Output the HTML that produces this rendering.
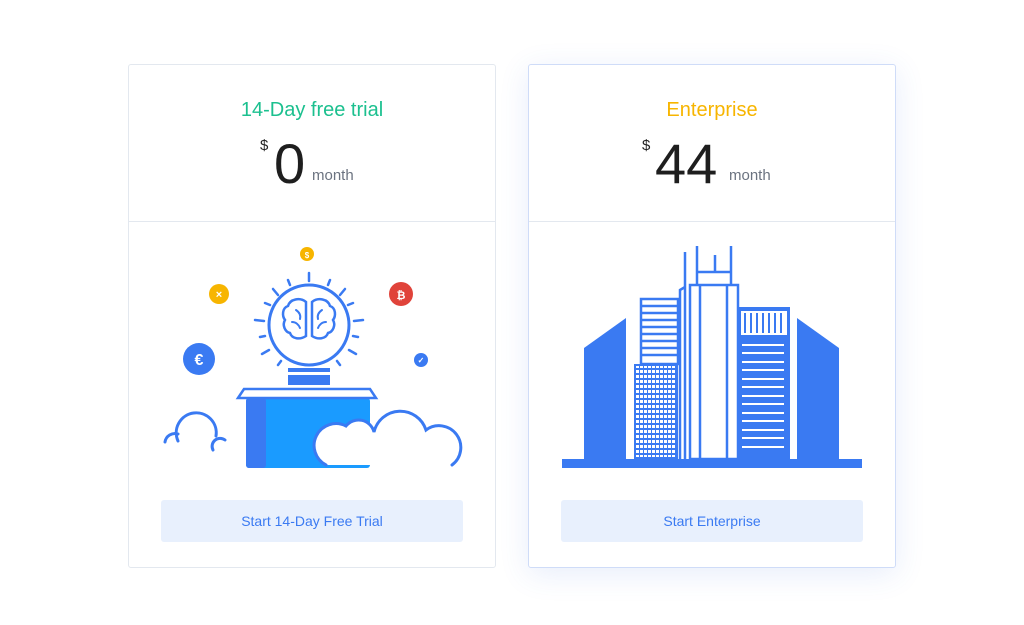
<!DOCTYPE html>
<html><head><style>
body{margin:0;width:1024px;height:625px;background:#fff;font-family:"Liberation Sans",sans-serif;position:relative;overflow:hidden}
.card{position:absolute;top:64px;width:366px;height:502px;border:1px solid #e3e8ef;border-radius:3px;background:#fff}
.c2{border-color:#cfdcf8;box-shadow:0 6px 30px rgba(60,110,220,.12)}
.title{position:absolute;top:98px;width:100%;text-align:center;font-size:20px}
.div{position:absolute;top:156px;left:0;right:0;height:1px;background:#e3e8ef}
.btn{position:absolute;left:32px;top:435px;width:302px;height:42px;background:#e8f0fd;border-radius:3px;color:#3a7af2;font-size:14px;text-align:center;line-height:42px}
.dol{position:absolute;font-size:15px;color:#222}
.num{position:absolute;font-size:56px;color:#1e1e1e;line-height:1}
.mo{position:absolute;font-size:15px;color:#6b7380}
</style></head><body>
<div class="card" style="left:128px">
 <div class="title" style="top:34px;color:#1cc08f">14-Day free trial</div>
 <div class="dol" style="left:131px;top:72px">$</div>
 <div class="num" style="left:145px;top:71px">0</div>
 <div class="mo" style="left:183px;top:102px">month</div>
 <div class="div"></div>
 <div class="btn">Start 14-Day Free Trial</div>
</div>
<div class="card c2" style="left:528px">
 <div class="title" style="top:34px;color:#f7b500">Enterprise</div>
 <div class="dol" style="left:113px;top:72px">$</div>
 <div class="num" style="left:126px;top:71px">44</div>
 <div class="mo" style="left:200px;top:102px">month</div>
 <div class="div"></div>
 <div class="btn">Start Enterprise</div>
</div>
<svg width="1024" height="625" style="position:absolute;left:0;top:0">
<g fill="none" stroke="#3a7af2" stroke-width="3" stroke-linecap="round">
 <circle cx="309" cy="325" r="40"/>
 <g stroke-width="2.5">
 <line x1="309" y1="273" x2="309" y2="281"/><line x1="288" y1="280" x2="290" y2="285"/><line x1="330" y1="280" x2="328" y2="285"/>
 <line x1="273" y1="289" x2="278" y2="295"/><line x1="345" y1="289" x2="340" y2="295"/>
 <line x1="265" y1="303" x2="270" y2="305"/><line x1="353" y1="303" x2="348" y2="305"/>
 <line x1="255" y1="320" x2="264" y2="321"/><line x1="363" y1="320" x2="354" y2="321"/>
 <line x1="260" y1="337" x2="265" y2="336"/><line x1="358" y1="337" x2="353" y2="336"/>
 <line x1="262" y1="354" x2="269" y2="350"/><line x1="356" y1="354" x2="349" y2="350"/>
 <line x1="278" y1="365" x2="281" y2="361"/><line x1="340" y1="365" x2="337" y2="361"/>
 </g>
 <path d="M306 302c-6-5-16-3-18 4-6 2-6 10-3 14-3 5 0 12 5 13 2 6 10 7 16 3z" stroke-width="2.5"/>
 <path d="M312 302c6-5 16-3 18 4 6 2 6 10 3 14 3 5 0 12-5 13-2 6-10 7-16 3z" stroke-width="2.5"/>
 <path d="M296 310c3 2 5 5 4 9M292 322c4 0 7 3 8 6M322 310c-3 2-5 5-4 9M326 322c-4 0-7 3-8 6" stroke-width="2"/>
 <path d="M165 442a10 10 0 0 1 13-8M178 441a20 20 0 1 1 38-5M213 450a8 8 0 0 1 12-10" />
</g>
<rect x="288" y="368" width="42" height="17" fill="#3a7af2"/><rect x="284" y="372" width="50" height="3" fill="#fff"/>
<rect x="246" y="398" width="124" height="70" rx="3" fill="#1a9bff"/><rect x="246" y="398" width="20" height="70" rx="3" fill="#3a7af2"/>
<path d="M238 398l6-9h126l6 9z" fill="#fff" stroke="#3a7af2" stroke-width="2.5"/>
<path d="M326 465A21 21 0 0 1 346 426A16 16 0 0 1 374 432A27 27 0 0 1 426 430A19 19 0 0 1 452 465" fill="#fff" stroke="#3a7af2" stroke-width="3" stroke-linecap="round"/>
<circle cx="307" cy="254" r="7" fill="#f7b500"/><circle cx="219" cy="294" r="10" fill="#f7b500"/>
<circle cx="401" cy="294" r="12" fill="#e0433a"/><circle cx="199" cy="359" r="16" fill="#3a7af2"/><circle cx="421" cy="360" r="7" fill="#3a7af2"/>
<g fill="#fff" font-size="11" font-weight="bold" text-anchor="middle" font-family="Liberation Sans">
<text x="307" y="258" font-size="8">$</text><text x="219" y="298">×</text><text x="401" y="299">₿</text><text x="199" y="365" font-size="16">€</text><text x="421" y="363" font-size="8">✓</text></g>
<rect x="562" y="459" width="300" height="9" fill="#3a7af2"/>
<path d="M584 348L626 318V459H584z M839 348L797 318V459H839z" fill="#3a7af2"/>
<rect x="641" y="299" width="37" height="65" fill="#fff" stroke="#3a7af2" stroke-width="2.5"/>
<g stroke="#3a7af2" stroke-width="2.5"><path d="M641 306h37M641 313h37M641 320h37M641 327h37M641 334h37M641 341h37M641 348h37M641 355h37"/></g>
<rect x="634" y="364" width="44" height="95" fill="#3a7af2"/>
<rect x="636" y="366" width="40" height="91" fill="url(#grid)"/>
<defs><pattern id="grid" width="4" height="5" patternUnits="userSpaceOnUse"><rect width="3" height="3" fill="#fff"/></pattern></defs>
<g fill="none" stroke="#3a7af2" stroke-width="2.5">
<path d="M680 459V290l5-3V459M685 252V287"/>
<rect x="690" y="285" width="48" height="174"/><path d="M700 285V459M727 285V459"/>
<path d="M697 285V246M731 285V246M715 272V255M697 272h34"/>
</g>
<rect x="738" y="307" width="52" height="152" fill="#3a7af2"/>
<rect x="741" y="311" width="46" height="24" fill="#fff"/>
<g stroke="#3a7af2" stroke-width="2"><path d="M745 313v20M751 313v20M757 313v20M763 313v20M769 313v20M775 313v20M781 313v20"/></g>
<g stroke="#fff" stroke-width="2"><path d="M742 345h42M742 353h42M742 362h42M742 370h42M742 379h42M742 387h42M742 396h42M742 404h42M742 413h42M742 421h42M742 430h42M742 438h42M742 447h42"/></g>
</svg>
</body></html>
